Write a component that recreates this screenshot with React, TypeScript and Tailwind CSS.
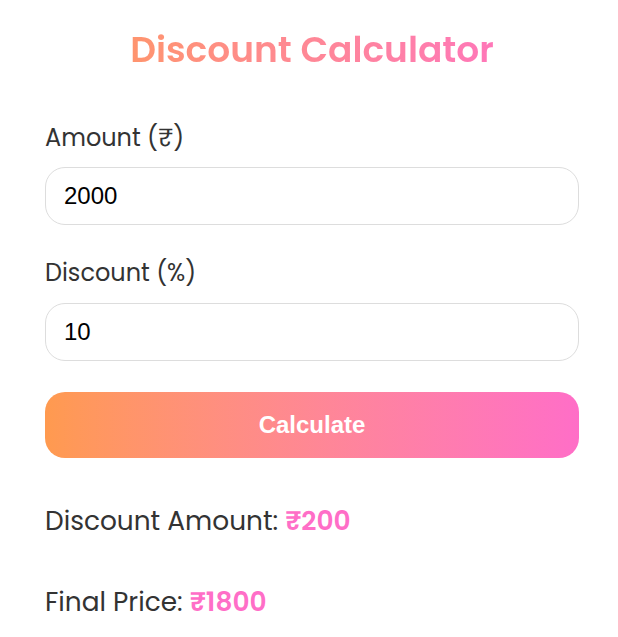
import { useState } from "react";

export default function App() {
  const [amount, setAmount] = useState("2000");
  const [discount, setDiscount] = useState("10");
  const [result, setResult] = useState({ off: 200, final: 1800 });

  const calculate = () => {
    const a = parseFloat(amount) || 0;
    const d = parseFloat(discount) || 0;
    const off = (a * d) / 100;
    setResult({ off, final: a - off });
  };

  return (
    <div className="min-h-screen bg-white font-['Poppins','Noto_Sans','DejaVu_Sans',sans-serif] text-[#333]">
      <div className="pl-[45px] pr-[39px] pt-[23px]">
        {/* Heading */}
        <h1 className="text-center text-[36px] leading-[54px] font-semibold bg-gradient-to-r from-[#ff9a56] to-[#ff6ec7] bg-clip-text text-transparent">
          Discount Calculator
        </h1>

        {/* Amount */}
        <label className="block mt-[43px] text-[24px] leading-[36px]">Amount (₹)</label>
        <input
          type="number"
          value={amount}
          onChange={(e) => setAmount(e.target.value)}
          className="mt-[11px] block w-full h-[58px] rounded-[20px] border border-[#ddd] px-[18px] text-[24px] text-black font-['Liberation_Sans',Arial,sans-serif] outline-none"
        />

        {/* Discount */}
        <label className="block mt-[30px] text-[24px] leading-[36px]">Discount (%)</label>
        <input
          type="number"
          value={discount}
          onChange={(e) => setDiscount(e.target.value)}
          className="mt-[12px] block w-full h-[58px] rounded-[20px] border border-[#ddd] px-[18px] text-[24px] text-black font-['Liberation_Sans',Arial,sans-serif] outline-none"
        />

        <button
          onClick={calculate}
          className="mt-[31px] block w-full h-[66px] rounded-[20px] bg-gradient-to-r from-[#ff9a4f] to-[#ff6ec7] text-white text-[24px] font-bold font-['Liberation_Sans',Arial,sans-serif]"
        >
          Calculate
        </button>

        {/* Results */}
        <p className="mt-[43px] text-[26.4px] leading-[39px]">
          Discount Amount: <span className="font-semibold text-[#ff6ec7]">₹{result.off}</span>
        </p>
        <p className="mt-[42px] text-[26.4px] leading-[39px]">
          Final Price: <span className="font-semibold text-[#ff6ec7]">₹{result.final}</span>
        </p>
      </div>
    </div>
  );
}
